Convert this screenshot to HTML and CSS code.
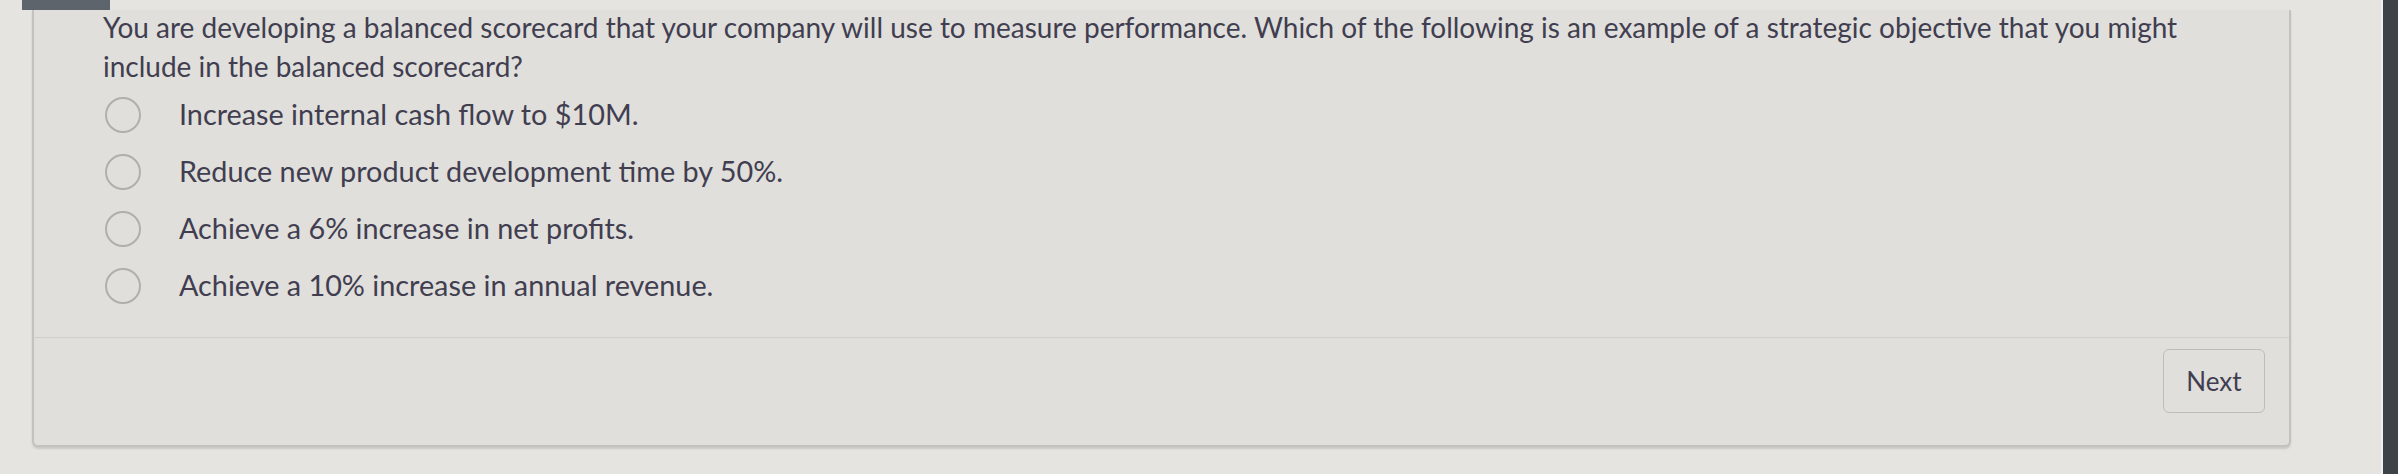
FILE: index.html
```html
<!DOCTYPE html>
<html lang="en">
<head>
    <meta charset="UTF-8">
    <meta name="viewport" content="width=device-width, initial-scale=1.0">
    <title>Quiz Question</title>
    <link rel="stylesheet" href="styles.css">
</head>
<body>
    <div class="screen">
        <main class="quiz">
            <div class="tab"></div>
            <section class="question-card">
                <div class="question-body">
                    <p class="question-text">You are developing a balanced scorecard that your company will use to measure performance. Which of the following is an example of a strategic objective that you might include in the balanced scorecard?</p>
                    <ul class="answers">
                        <li class="answer">
                            <span class="radio"></span>
                            <span class="answer-label">Increase internal cash flow to $10M.</span>
                        </li>
                        <li class="answer">
                            <span class="radio"></span>
                            <span class="answer-label">Reduce new product development time by 50%.</span>
                        </li>
                        <li class="answer">
                            <span class="radio"></span>
                            <span class="answer-label">Achieve a 6% increase in net profits.</span>
                        </li>
                        <li class="answer">
                            <span class="radio"></span>
                            <span class="answer-label">Achieve a 10% increase in annual revenue.</span>
                        </li>
                    </ul>
                </div>
                <div class="question-footer">
                    <button class="next-btn" type="button">Next</button>
                </div>
            </section>
        </main>
        <div class="bezel"></div>
    </div>
</body>
</html>
```

FILE: styles.css
```css
:root {
    --page-bg: #e5e4e1;
    --card-bg: #e0dfdc;
    --text-color: #413e50;
    --border-color: #c3c2bf;
    --radio-color: #b0afac;
}

body {
    margin: 0;
    padding: 0;
    font-family: 'Lato', 'Noto Sans', sans-serif;
    color: var(--text-color);
    background-color: var(--page-bg);
    overflow: hidden;
}

.screen {
    display: flex;
    height: 474px;
}

.quiz {
    flex: 0 0 2381px;
    display: flex;
    flex-direction: column;
}

.tab {
    width: 88px;
    height: 10px;
    margin-left: 22px;
    background-color: #5d646b;
}

.question-card {
    width: 2259px;
    margin-left: 32px;
    box-sizing: border-box;
    background-color: var(--card-bg);
    border: 2px solid var(--border-color);
    border-top: none;
    border-radius: 0 0 6px 6px;
    box-shadow: 0 2px 2px rgba(0, 0, 0, 0.12);
}

.question-body {
    padding: 0 40px 23px 69px;
}

.question-text {
    margin: -2px 0 0;
    font-size: 28px;
    line-height: 39px;
    max-width: 2110px;
}

.answers {
    list-style: none;
    margin: 0;
    padding: 0;
}

.answer {
    display: flex;
    align-items: center;
    height: 57px;
    font-size: 28.8px;
    line-height: 57px;
}

.radio {
    flex: 0 0 auto;
    width: 36px;
    height: 36px;
    margin-left: 2px;
    margin-right: 38px;
    box-sizing: border-box;
    border: 2px solid var(--radio-color);
    border-radius: 50%;
}

.question-footer {
    display: flex;
    justify-content: flex-end;
    padding: 11px 24px 32px;
    border-top: 1px solid #d0cfcc;
}

.next-btn {
    width: 102px;
    height: 64px;
    font-family: inherit;
    font-size: 26px;
    color: var(--text-color);
    background-color: transparent;
    border: 1px solid #bdbcb9;
    border-radius: 6px;
}

.bezel {
    flex: 1;
    background-color: #3e4348;
    border-left: 2px solid #eef0f3;
}
```
